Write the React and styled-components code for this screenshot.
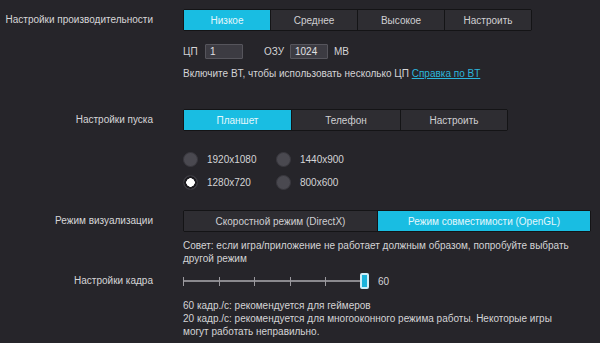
import React from "react";
import { styled, createGlobalStyle } from "styled-components";

const GlobalStyle = createGlobalStyle`
	html, body {
		margin: 0;
		padding: 0;
		background: #26252a;
	}
	body {
		font-family: "Liberation Sans", Arial, sans-serif;
		font-size: 10px;
		color: #d4d4d6;
	}
`;

const App = () => {
	return (
		<Page>
			<GlobalStyle />
			<Section>
				<Label>Настройки производительности</Label>
				<Content>
					<Segmented>
						<SegButton active width={86}>Низкое</SegButton>
						<SegButton width={86}>Среднее</SegButton>
						<SegButton width={86}>Высокое</SegButton>
						<SegButton width={86}>Настроить</SegButton>
					</Segmented>
					<ResourceRow>
						<span>ЦП</span>
						<NumInput defaultValue="1" />
						<RamLabel>ОЗУ</RamLabel>
						<NumInput defaultValue="1024" />
						<span>MB</span>
					</ResourceRow>
					<Hint>
						Включите BT, чтобы использовать несколько ЦП <HelpLink href="#">Справка по BT</HelpLink>
					</Hint>
				</Content>
			</Section>

			<Section gap={28}>
				<Label>Настройки пуска</Label>
				<Content>
					<Segmented>
						<SegButton active width={107}>Планшет</SegButton>
						<SegButton width={108}>Телефон</SegButton>
						<SegButton width={106}>Настроить</SegButton>
					</Segmented>
					<RadioGrid>
						<RadioItem><Radio /> 1920x1080</RadioItem>
						<RadioItem><Radio /> 1440x900</RadioItem>
						<RadioItem><Radio checked /> 1280x720</RadioItem>
						<RadioItem><Radio /> 800x600</RadioItem>
					</RadioGrid>
				</Content>
			</Section>

			<Section gap={20}>
				<Label>Режим визуализации</Label>
				<Content>
					<Segmented>
						<SegButton width={193}>Скоростной режим (DirectX)</SegButton>
						<SegButton active width={212}>Режим совместимости (OpenGL)</SegButton>
					</Segmented>
					<Tip>
						Совет: если игра/приложение не работает должным образом, попробуйте выбрать<br />
						другой режим
					</Tip>
				</Content>
			</Section>

			<Section gap={8}>
				<Label rowHeight={16}>Настройки кадра</Label>
				<Content>
					<SliderRow>
						<Slider>
							<Track />
							{[0, 1, 2, 3, 4].map((i) => (
								<Tick key={i} style={{ left: `${i * 35.5}px` }} />
							))}
							<Thumb />
						</Slider>
						<span>60</span>
					</SliderRow>
					<FpsNote>
						60 кадр./с: рекомендуется для геймеров<br />
						20 кадр./с: рекомендуется для многооконного режима работы. Некоторые игры<br />
						могут работать неправильно.
					</FpsNote>
				</Content>
			</Section>
		</Page>
	);
};

export default App;

// css
const Page = styled.div`
	width: 600px;
	height: 343px;
	box-sizing: border-box;
	padding-top: 9px;
	overflow: hidden;
`;

const Section = styled.div`
	display: grid;
	grid-template-columns: 153px 1fr;
	column-gap: 30px;
	margin-top: ${(props) => props.gap || 0}px;
`;

const Label = styled.div`
	text-align: right;
	line-height: ${(props) => props.rowHeight || 22}px;
	white-space: nowrap;
	color: #d6d6d8;
`;

const Content = styled.div`
	display: flex;
	flex-direction: column;
	align-items: flex-start;
`;

const Segmented = styled.div`
	display: flex;
	height: 22px;
	box-sizing: border-box;
	border: 1px solid #141416;
	border-radius: 2px;
	background: #141416;
	gap: 1px;
`;

const SegButton = styled.button`
	width: ${(props) => props.width}px;
	height: 20px;
	padding: 0;
	border: none;
	font-family: inherit;
	font-size: 10px;
	cursor: pointer;
	background: ${(props) => (props.active ? "#19bde2" : "#2e2d32")};
	color: ${(props) => (props.active ? "#e4f7fc" : "#d0d0d2")};
`;

const ResourceRow = styled.div`
	display: flex;
	align-items: center;
	margin-top: 12px;
	height: 16px;

	& > span:first-child {
		width: 22px;
	}
	& > span:last-child {
		margin-left: 6px;
	}
`;

const RamLabel = styled.span`
	margin-left: 21px;
	width: 26px;
`;

const NumInput = styled.input`
	width: 38px;
	height: 15px;
	box-sizing: border-box;
	padding: 1px 0 0 4px;
	font-family: inherit;
	font-size: 10px;
	color: #e0e0e2;
	background: #3c3b42;
	border: 1px solid #56555c;
	border-radius: 1px;
	outline: none;
`;

const Hint = styled.div`
	margin-top: 8px;
	line-height: 14px;
	white-space: nowrap;
`;

const HelpLink = styled.a`
	color: #2cb6dc;
	text-decoration: underline;
`;

const RadioGrid = styled.div`
	display: grid;
	grid-template-columns: 93px 93px;
	row-gap: 8px;
	margin-top: 21px;
`;

const RadioItem = styled.label`
	display: flex;
	align-items: center;
	gap: 9px;
	height: 15px;
`;

const Radio = styled.span`
	width: 15px;
	height: 15px;
	box-sizing: border-box;
	border-radius: 50%;
	border: 1px solid #39383e;
	background: ${(props) =>
		props.checked
			? "radial-gradient(circle, #ffffff 0 4px, #1c1b1f 4.5px 6px, #4a4950 6.5px)"
			: "#4a4950"};
`;

const Tip = styled.div`
	margin-top: 7px;
	line-height: 13px;
	white-space: nowrap;
`;

const SliderRow = styled.div`
	display: flex;
	align-items: center;
	height: 16px;
	gap: 9px;
`;

const Slider = styled.div`
	position: relative;
	width: 186px;
	height: 16px;
`;

const Track = styled.div`
	position: absolute;
	left: 0;
	right: 6px;
	top: 7px;
	height: 2px;
	background: #8a898e;
`;

const Tick = styled.div`
	position: absolute;
	top: 4px;
	width: 1px;
	height: 9px;
	background: #9a999e;
`;

const Thumb = styled.div`
	position: absolute;
	left: 177px;
	top: 0;
	width: 9px;
	height: 16px;
	box-sizing: border-box;
	border: 2px solid #cdeef8;
	border-radius: 2px;
	background: #1ab3da;
`;

const FpsNote = styled.div`
	margin-top: 10px;
	line-height: 13px;
	white-space: nowrap;
`;
